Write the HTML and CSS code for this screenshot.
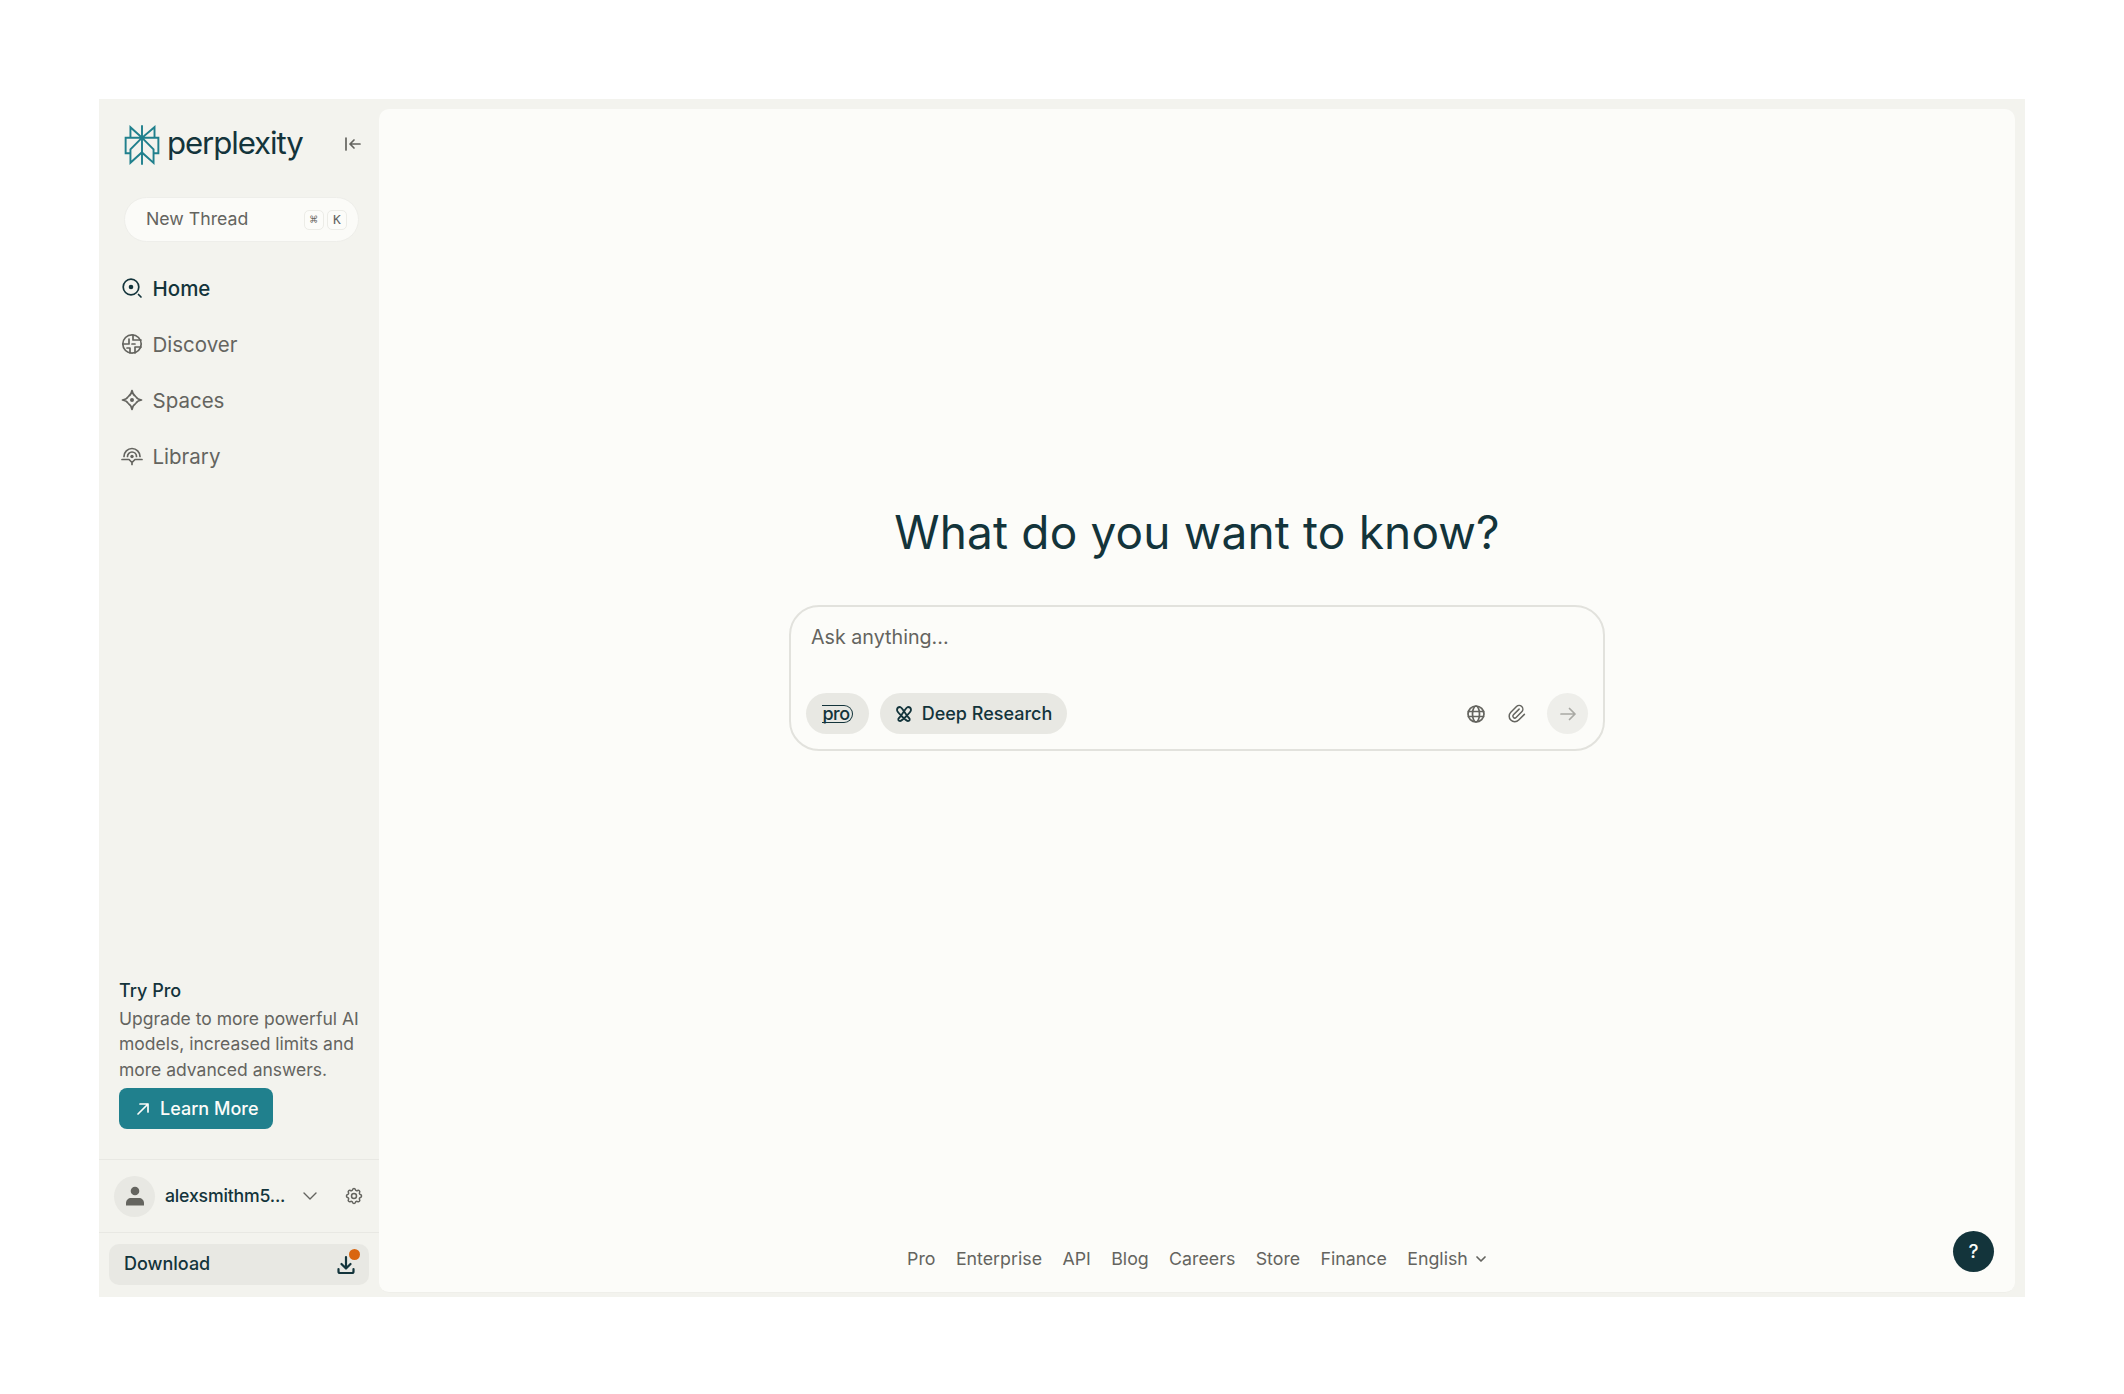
FILE: index.html
```html
<!DOCTYPE html>
<html lang="en">
<head>
<meta charset="utf-8">
<title>Perplexity</title>
<link rel="stylesheet" href="styles.css">
</head>
<body>
<div class="app">
  <aside class="sidebar">
    <div class="brand">
      <svg class="logo" viewBox="0 0 24 24" width="40" height="40"><path fill="#20808d" d="M22.3977 7.0896h-2.3106V.0676l-7.5094 6.3542V.1577h-1.1554v6.1966L4.4904 0v7.0896H1.6023v10.3976h2.8882V24l6.932-6.3591v6.2005h1.1554v-6.0469l6.9318 6.1807v-6.4879h2.8882V7.0896zm-3.4657-4.531v4.531h-5.355l5.355-4.531zm-13.2862.0676 4.8691 4.4634H5.6458V2.6262zM2.7576 16.332V8.245h7.8476l-6.1149 6.1147v1.9723H2.7576zm2.8882 5.0404v-3.8852h.0001v-2.6488l5.7763-5.7764v7.0111l-5.7764 5.2993zm12.7086.0248-5.7766-5.1509V9.0618l5.7766 5.7766v6.5588zm2.8882-5.0652h-1.733v-1.9723L13.3948 8.245h7.8478v8.087z"/></svg>
      <span class="wordmark">perplexity</span>
      <svg class="collapse" viewBox="0 0 18 18" width="18" height="18"><path d="M2 3v12M16 9H6M10 5 6 9l4 4"/></svg>
    </div>
    <div class="new-thread">
      <span>New Thread</span>
      <span class="keys"><kbd>⌘</kbd><kbd>K</kbd></span>
    </div>
    <nav class="nav">
      <a class="nav-item active">
        <svg viewBox="0 0 22 22" width="22" height="22"><circle cx="10" cy="10" r="7.800"/><circle class="solid" cx="10" cy="10" r="2.300"/><path d="m17.500 17.500 2.500 2.500"/></svg>Home
      </a>
      <a class="nav-item">
        <svg viewBox="0 0 22 22" width="22" height="22"><circle cx="11" cy="11" r="9.200"/><path d="M2 11h6V6M12 2v5h8M14 20v-6h6M9 20v-5H6M11 11h3"/></svg>Discover
      </a>
      <a class="nav-item">
        <svg viewBox="0 0 22 22" width="22" height="22"><path d="M11 1.500c.6 3.200 1.700 4.700 3.200 5.500M11 1.500c-.6 3.200-1.700 4.700-3.200 5.500M1.500 11c3.200.6 4.700 1.700 5.500 3.200M1.500 11c3.200-.6 4.700-1.700 5.500-3.200M20.500 11c-3.200.6-4.700 1.700-5.500 3.200M20.500 11c-3.200-.6-4.700-1.700-5.500-3.200M11 20.500c.6-3.200 1.700-4.700 3.200-5.500M11 20.500c-.6-3.200-1.700-4.700-3.200-5.500"/><circle class="solid" cx="11" cy="11" r="2"/></svg>Spaces
      </a>
      <a class="nav-item">
        <svg viewBox="0 0 22 22" width="22" height="22"><path d="M3 11.500a8 8 0 0 1 16 0M6.500 11.500a4.500 4.500 0 0 1 9 0M1 14.500h7l3 3 3-3h7M11 18v1.500"/><circle class="solid" cx="11" cy="11.500" r="1.700"/></svg>Library
      </a>
    </nav>
    <section class="promo">
      <h2>Try Pro</h2>
      <p>Upgrade to more powerful AI models, increased limits and more advanced answers.</p>
      <a class="learn">
        <svg viewBox="0 0 16 16" width="16" height="16"><path d="M3 13 13 3M5 3h8v8"/></svg>Learn More
      </a>
    </section>
    <div class="user">
      <span class="avatar"><svg viewBox="0 0 20 20" width="20" height="20"><circle cx="10" cy="5" r="4.300"/><path d="M1 19.500v-2.500c0-3 2.500-5 5-5h8c2.500 0 5 2 5 5v2.500z"/></svg></span>
      <span class="name">alexsmithm5...</span>
      <svg class="chev" viewBox="0 0 16 16" width="16" height="16"><path d="m2 5 6 6 6-6"/></svg>
      <svg class="gear" viewBox="0 0 24 24" width="20" height="20"><path d="M10.300 4.300c.4-1.800 3-1.800 3.400 0a1.700 1.700 0 0 0 2.600 1.100c1.500-.9 3.300.8 2.400 2.400a1.700 1.700 0 0 0 1 2.500c1.800.4 1.800 3 0 3.400a1.700 1.700 0 0 0-1 2.600c.9 1.500-.9 3.300-2.400 2.400a1.700 1.700 0 0 0-2.600 1c-.4 1.800-3 1.800-3.400 0a1.700 1.700 0 0 0-2.600-1c-1.500.9-3.300-.9-2.400-2.400a1.700 1.700 0 0 0-1-2.600c-1.800-.4-1.800-3 0-3.400a1.700 1.700 0 0 0 1-2.500c-.9-1.600.9-3.300 2.400-2.400a1.700 1.700 0 0 0 2.600-1.100z"/><circle cx="12" cy="12" r="3"/></svg>
    </div>
    <div class="download-wrap">
      <a class="download">
        <span>Download</span>
        <span class="dl-icon">
          <svg viewBox="0 0 20 20" width="20" height="20"><path d="M10 2v11M5.500 9 10 13.500 14.500 9M2.500 14v2.500a1.500 1.500 0 0 0 1.500 1.500h12a1.500 1.500 0 0 0 1.500-1.500V14"/></svg>
          <i class="dot"></i>
        </span>
      </a>
    </div>
  </aside>
  <main class="main">
    <div class="hero">
      <h1>What do you want to know?</h1>
      <div class="ask">
        <div class="placeholder">Ask anything...</div>
        <div class="ask-bar">
          <span class="pill pro"><span class="pro-mark">pro</span></span>
          <span class="pill deep">
            <svg viewBox="0 0 18 18" width="18" height="18"><path d="M5 2c2 0 6 8 9 11 1.500 1.500.5 3-1 3C11 16 2 7 2 5c0-2 1-3 3-3zM13 2c-2 0-6 8-9 11-1.500 1.500-.5 3 1 3 2 0 11-9 11-11 0-2-1-3-3-3z"/></svg>
            Deep Research
          </span>
          <span class="tools">
            <svg viewBox="0 0 18 18" width="18" height="18"><circle cx="9" cy="9" r="8"/><ellipse cx="9" cy="9" rx="3.500" ry="8"/><path d="M1.500 6.500h15M1.500 11.500h15"/></svg>
            <svg class="clip" viewBox="0 0 24 24" width="21" height="21"><path d="M15 7l-6.500 6.500a1.500 1.500 0 0 0 3 3l6.500-6.500a3 3 0 0 0-6-6l-6.500 6.500a4.500 4.500 0 0 0 9 9l6.500-6.500"/></svg>
            <span class="send"><svg viewBox="0 0 18 18" width="18" height="18"><path d="M2 9h14M10.500 3.500 16 9l-5.500 5.500"/></svg></span>
          </span>
        </div>
      </div>
    </div>
    <footer class="foot">
      <a>Pro</a><a>Enterprise</a><a>API</a><a>Blog</a><a>Careers</a><a>Store</a><a>Finance</a>
      <a class="lang">English <svg viewBox="0 0 12 12" width="12" height="12"><path d="m2 4 4 4 4-4"/></svg></a>
    </footer>
    <button class="help">?</button>
  </main>
</div>
</body>
</html>
```
FILE: styles.css
```css
* { box-sizing: border-box; }
html, body { margin: 0; background: #fff; }
body {
  padding: 99px;
  height: 1394px;
  font-family: Inter, "Noto Sans", sans-serif;
  color: #13343b;
  overflow: hidden;
}
svg { fill: none; stroke: currentColor; stroke-width: 1.7; stroke-linecap: round; stroke-linejoin: round; flex: none; }
svg .solid { fill: currentColor; stroke: none; }
.app {
  display: flex;
  width: 1926px;
  height: 1198px;
  background: #f3f3ee;
  padding: 10px 10px 4px 0;
}
.sidebar {
  width: 280px;
  flex: none;
  display: flex;
  flex-direction: column;
  margin-top: -10px;
  margin-bottom: -4px;
}
.brand {
  display: flex;
  align-items: center;
  height: 40px;
  margin: 26px 0 0 23px;
}
.logo { stroke: none; }
.logo path { stroke: none; }
.wordmark {
  margin-left: 5px;
  font-size: 31.200px;
  letter-spacing: -1.100px;
  line-height: 40px;
  position: relative;
  top: -2px;
}
.collapse { margin-left: 41px; color: #64645f; position: relative; top: -1px; }
.new-thread {
  margin: 32px 0 0 25px;
  width: 235px;
  height: 45px;
  border-radius: 23px;
  background: #fbfbf8;
  border: 1px solid #eeeeea;
  display: flex;
  align-items: center;
  justify-content: space-between;
  padding: 0 9px 2px 21px;
  font-size: 17.700px;
  color: #64645f;
}
.keys { display: flex; gap: 3px; position: relative; top: 1px; right: 2px; }
kbd {
  width: 20px;
  height: 20px;
  display: flex;
  align-items: center;
  justify-content: center;
  border: 1px solid #ecece7;
  border-radius: 5px;
  background: #fcfcf9;
  font: 13px "DejaVu Sans Mono", monospace;
  color: #64645f;
}
.nav { display: flex; flex-direction: column; margin-top: 18px; }
.nav-item {
  display: flex;
  align-items: center;
  gap: 9.500px;
  height: 56px;
  padding-left: 22px;
  font-size: 20.500px;
  color: #64645f;
}
.nav-item.active { color: #13343b; font-weight: 500; }
.promo { margin: auto 0 0 20px; padding-bottom: 30px; }
.promo h2 { margin: 0 0 3px; font-size: 18px; line-height: 25px; font-weight: 500; }
.promo p { margin: 0 0 6px; width: 250px; font-size: 17.500px; line-height: 25.500px; color: #64645f; }
.learn {
  display: inline-flex;
  align-items: center;
  gap: 9px;
  width: 154px;
  height: 41px;
  padding-left: 16px;
  border-radius: 8px;
  background: #20808d;
  color: #fcfcf9;
  font-size: 18px;
  font-weight: 500;
}
.user {
  height: 74px;
  border-top: 1px solid #e8e8e3;
  border-bottom: 1px solid #e8e8e3;
  display: flex;
  align-items: center;
  padding-left: 15px;
}
.avatar {
  width: 41px;
  height: 41px;
  border-radius: 50%;
  background: #e8e8e3;
  display: flex;
  align-items: center;
  justify-content: center;
  color: #64645f;
}
.avatar svg { fill: currentColor; stroke: none; }
.name { margin-left: 10px; width: 122px; padding-bottom: 2px; font-size: 17.700px; font-weight: 500; white-space: nowrap; letter-spacing: -.2px; }
.chev { margin-left: 15px; color: #64645f; stroke-width: 1.400; }
.gear { margin-left: 26px; color: #64645f; stroke-width: 1.800; }
.download-wrap { padding: 11px 10px 12px; }
.download {
  height: 41px;
  border-radius: 10px;
  background: #e8e8e3;
  display: flex;
  align-items: center;
  justify-content: space-between;
  padding: 0 13px 2px 15px;
  font-size: 18px;
  font-weight: 500;
}
.dl-icon { position: relative; display: flex; top: 1px; }
.dl-icon svg { stroke-width: 2.200; }
.dot {
  position: absolute;
  width: 11px;
  height: 11px;
  right: -4px;
  top: -6px;
  border-radius: 50%;
  background: #d9660f;
}
.main {
  flex: 1;
  position: relative;
  background: #fcfcf9;
  border-radius: 10px;
  display: flex;
  flex-direction: column;
  align-items: center;
  border-bottom: 1px solid #efefea;
}
.hero { display: flex; flex-direction: column; align-items: center; margin-top: 394px; }
h1 {
  margin: 0;
  font-size: 46px;
  line-height: 58px;
  font-weight: 400;
  letter-spacing: .15px;
  color: #13343b;
}
.ask {
  margin-top: 44px;
  width: 816px;
  height: 146px;
  border: 2px solid #e2e2dd;
  border-radius: 30px;
  background: #fcfcf9;
  display: flex;
  flex-direction: column;
  justify-content: space-between;
  padding: 0 14px 15px 15px;
}
.placeholder { padding: 16px 0 0 5px; font-size: 19.700px; line-height: 28px; color: #64645f; }
.ask-bar { display: flex; align-items: center; gap: 11px; }
.pill {
  height: 41px;
  border-radius: 21px;
  background: #e8e8e3;
  display: flex;
  align-items: center;
  justify-content: center;
}
.pro { width: 63px; }
.pro-mark {
  font-size: 18px;
  line-height: 16px;
  font-weight: 500;
  letter-spacing: -.5px;
  border-top: 1.500px solid #13343b;
  border-right: 1.500px solid #13343b;
  border-bottom: 1.500px solid #13343b;
  border-radius: 0 9px 9px 0;
  padding-right: 2px;
  margin-top: 0;
}
.deep { width: 187px; gap: 9px; font-size: 18px; font-weight: 500; }
.deep svg { stroke-width: 1.800; }
.tools { margin-left: auto; display: flex; align-items: center; gap: 21px; color: #64645f; padding-right: 1px; }
.send {
  width: 41px;
  height: 41px;
  margin-left: -1px;
  border-radius: 50%;
  background: #eeeeea;
  color: #a9a9a4;
  display: flex;
  align-items: center;
  justify-content: center;
}
.foot {
  margin-top: auto;
  margin-bottom: 21px;
  display: flex;
  align-items: center;
  gap: 20.400px;
  font-size: 17.800px;
  line-height: 24px;
  color: #64645f;
}
.lang { display: flex; align-items: center; gap: 7px; }
.help {
  position: absolute;
  right: 21px;
  bottom: 20px;
  width: 41px;
  height: 41px;
  padding: 0;
  border: 0;
  border-radius: 50%;
  background: #13343b;
  color: #fcfcf9;
  font: 500 19px Inter, sans-serif;
}
```
